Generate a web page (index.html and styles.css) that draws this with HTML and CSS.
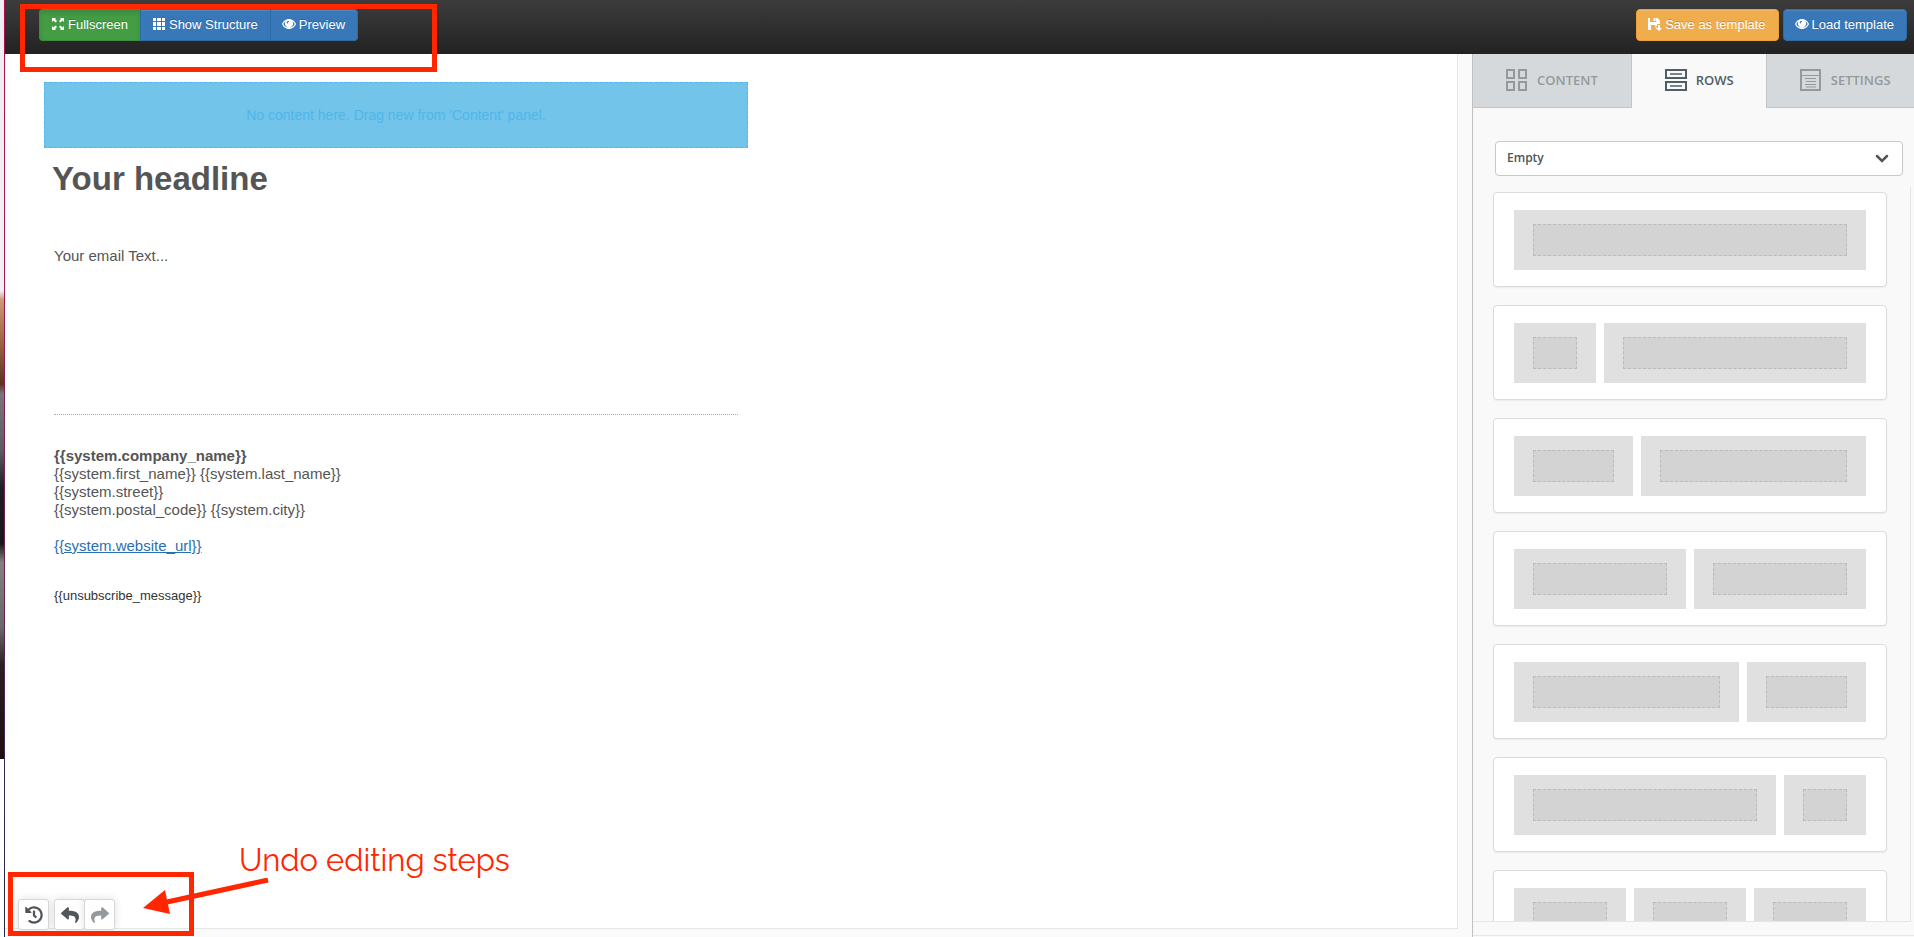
FILE: index.html
```html
<!DOCTYPE html>
<html lang="en">
<head>
    <meta charset="UTF-8">
    <title>Email template editor</title>
    <link rel="stylesheet" href="styles.css">
</head>
<body>
    <div class="app">
        <div class="photo-strip"></div>

        <div class="editor">
            <header class="topbar">
                <div class="btn-group">
                    <button type="button" class="btn btn-success">
                        <svg class="icon" viewBox="0 0 14 14"><path d="M1 1h4L4 2l2 2-1.500 1.500-2-2L1 5zM13 1v4l-1.500-1.500-2 2L8 4l2-2-1-1zM1 13V9l1.500 1.500 2-2L6 10l-2 2 1 1zM13 13H9l1-1-2-2 1.500-1.500 2 2L13 9z"/></svg>
                        Fullscreen
                    </button>
                    <button type="button" class="btn btn-primary">
                        <svg class="icon" viewBox="0 0 14 14"><path d="M1 1h3v3H1zM5 1h4v3H5zM10 1h3v3h-3zM1 5h3v4H1zM5 5h4v4H5zM10 5h3v4h-3zM1 10h3v3H1zM5 10h4v3H5zM10 10h3v3h-3z"/></svg>
                        Show Structure
                    </button>
                    <button type="button" class="btn btn-primary">
                        <svg class="icon" viewBox="0 0 14 14"><path fill-rule="evenodd" d="M7 2c3.500 0 6 2.500 7 5-1 2.500-3.500 5-7 5S1 9.500 0 7c1-2.500 3.500-5 7-5zM3.700 4.300C2.600 5 1.800 6 1.300 7c.9 2 3 3.700 5.700 3.700S11.800 9 12.700 7c-.5-1-1.300-2-2.400-2.700a4 4 0 1 1-6.600 0zM6.500 4a1.700 1.700 0 0 0-1.600 2.200c.3.600 1 .3 1-.2 0-.6.400-.8.900-.9.700-.2.500-1-.3-1.100z"/></svg>
                        Preview
                    </button>
                </div>
                <div class="template-actions">
                    <button type="button" class="btn btn-warning">
                        <svg class="icon" viewBox="0 0 14 14"><path d="M0 1h2v4h6V1h1.500L12 3.500V7H9v2H7.500L9 11v1H8L7 8H3v5H0zM5.500 1h2v3h-2zM10 8h2v3h2l-3 3-3-3h2z"/></svg>
                        Save as template
                    </button>
                    <button type="button" class="btn btn-primary">
                        <svg class="icon" viewBox="0 0 14 14"><path fill-rule="evenodd" d="M7 2c3.500 0 6 2.500 7 5-1 2.500-3.500 5-7 5S1 9.500 0 7c1-2.500 3.500-5 7-5zM3.700 4.300C2.600 5 1.800 6 1.300 7c.9 2 3 3.700 5.700 3.700S11.800 9 12.700 7c-.5-1-1.300-2-2.400-2.700a4 4 0 1 1-6.600 0zM6.500 4a1.700 1.700 0 0 0-1.600 2.200c.3.600 1 .3 1-.2 0-.6.400-.8.900-.9.700-.2.500-1-.3-1.100z"/></svg>
                        Load template
                    </button>
                </div>
            </header>

            <div class="workspace">
                <main class="canvas">
                    <div class="email">
                        <div class="drop-zone">No content here. Drag new from 'Content' panel.</div>
                        <h1>Your headline</h1>
                        <p class="email-text">Your email Text...</p>
                        <hr>
                        <address>
                            <strong>{{system.company_name}}</strong><br>
                            {{system.first_name}} {{system.last_name}}<br>
                            {{system.street}}<br>
                            {{system.postal_code}} {{system.city}}<br>
                            <br>
                            <a href="#">{{system.website_url}}</a>
                        </address>
                        <p class="unsubscribe">{{unsubscribe_message}}</p>
                    </div>
                </main>

                <aside class="sidebar">
                    <nav class="tabs">
                        <button type="button" class="tab">
                            <svg viewBox="0 0 22 22"><path d="M1 1h7v8H1zM13 1h7v8h-7zM1 13h7v8H1zM13 13h7v8h-7z" stroke-width="2"/></svg>
                            CONTENT
                        </button>
                        <button type="button" class="tab active">
                            <svg viewBox="0 0 22 22"><path d="M1 1h20v8H1zM1 13h20v8H1z" stroke-width="2"/><path d="M5 5h12M5 17h12" stroke-width="1.500"/></svg>
                            ROWS
                        </button>
                        <button type="button" class="tab">
                            <svg viewBox="0 0 22 22"><path d="M1 1h19v20H1z" stroke-width="2"/><path d="M1 6.500h19M5 9.500h11M6 12.500h10M5 15.500h11M6 18h10" stroke-width="1"/></svg>
                            SETTINGS
                        </button>
                    </nav>

                    <div class="row-type">
                        <select aria-label="Row type">
                            <option>Empty</option>
                        </select>
                        <svg class="chevron" viewBox="0 0 14 9"><path d="M2 2l5 5 5-5"/></svg>
                    </div>

                    <div class="row-list">
                        <div class="row-card"><div class="col full"><span></span></div></div>
                        <div class="row-card"><div class="col quarter"><span></span></div><div class="col three-quarters"><span></span></div></div>
                        <div class="row-card"><div class="col third"><span></span></div><div class="col two-thirds"><span></span></div></div>
                        <div class="row-card"><div class="col full"><span></span></div><div class="col full"><span></span></div></div>
                        <div class="row-card"><div class="col two-thirds"><span></span></div><div class="col third"><span></span></div></div>
                        <div class="row-card"><div class="col three-quarters"><span></span></div><div class="col quarter"><span></span></div></div>
                        <div class="row-card"><div class="col full"><span></span></div><div class="col full"><span></span></div><div class="col full"><span></span></div></div>
                    </div>
                    <div class="sidebar-footer"></div>
                </aside>
            </div>
        </div>

        <div class="history">
            <button type="button" class="history-btn" aria-label="History">
                <svg viewBox="0 0 512 512"><path d="M504 255.531c.253 136.640-111.180 248.372-247.820 248.468-59.015.042-113.223-20.530-155.822-54.911-11.077-8.940-11.905-25.541-1.839-35.607l11.267-11.267c8.609-8.609 22.353-9.551 31.891-1.984C173.062 425.135 212.781 440 256 440c101.705 0 184-82.311 184-184 0-101.705-82.311-184-184-184-48.814 0-93.149 18.969-126.068 49.932l50.754 50.754c10.080 10.080 2.941 27.314-11.313 27.314H24c-8.837 0-16-7.163-16-16V38.627c0-14.254 17.234-21.393 27.314-11.314l49.372 49.372C129.209 34.136 189.552 8 256 8c136.810 0 247.747 110.780 248 247.531zm-180.912 78.784l9.823-12.630c8.138-10.463 6.253-25.542-4.210-33.679L288 256.349V152c0-13.255-10.745-24-24-24h-16c-13.255 0-24 10.745-24 24v135.651l65.409 50.874c10.463 8.137 25.541 6.253 33.679-4.210z"/></svg>
            </button>
            <div class="history-group">
                <button type="button" class="history-btn" aria-label="Undo">
                    <svg viewBox="0 0 512 512"><path d="M8.309 189.836L184.313 37.851C199.719 24.546 224 35.347 224 56.015v80.053c160.629 1.839 288 34.032 288 186.258 0 61.441-39.581 122.309-83.333 154.132-13.653 9.931-33.111-2.533-28.077-18.631 45.344-145.012-21.507-183.510-176.590-185.742V360c0 20.700-24.300 31.453-39.687 18.164l-176.004-152c-11.071-9.562-11.086-26.753 0-36.328z"/></svg>
                </button>
                <button type="button" class="history-btn redo" aria-label="Redo">
                    <svg viewBox="0 0 512 512"><path d="M503.691 189.836L327.687 37.851C312.281 24.546 288 35.347 288 56.015v80.053C127.371 137.907 0 170.100 0 322.326c0 61.441 39.581 122.309 83.333 154.132 13.653 9.931 33.111-2.533 28.077-18.631C66.066 312.815 132.917 274.317 288 272.085V360c0 20.700 24.300 31.453 39.687 18.164l176.004-152c11.071-9.562 11.086-26.753 0-36.328z"/></svg>
                </button>
            </div>
        </div>

        <!-- Help annotations over the editor -->
        <div class="mark mark-toolbar"></div>
        <div class="mark mark-history"></div>
        <svg class="arrow" viewBox="0 0 126 40"><path d="M125 2L24 24" stroke="#ff2600" stroke-width="5"/><path d="M0 30L22 12 27 36z" fill="#ff2600"/></svg>
        <div class="mark-label">Undo editing steps</div>
    </div>
</body>
</html>
```

FILE: styles.css
```css
* {
    box-sizing: border-box;
}

body {
    margin: 0;
    font-family: "Liberation Sans", Arial, sans-serif;
    background: #fff;
}

button {
    font-family: inherit;
    cursor: pointer;
}

.app {
    position: relative;
    display: flex;
    height: 100vh;
    overflow: hidden;
}

/* Edge of the page behind the editor */
.photo-strip {
    width: 4px;
    background: linear-gradient(#eeeef4 0, #f0f0f5 31%, #c99a74 32%, #a06b45 36%, #5a3420 41%, #77777b 42%, #5d5d61 48%, #202024 52%, #17171a 58%, #85807d 60%, #69666a 67%, #2a201e 71%, #1d100c 81%, #fff 81%);
}

.editor {
    flex: 1;
    min-width: 0;
    display: flex;
    flex-direction: column;
    border-left: 1px solid;
    border-image: linear-gradient(#b0104a, #a8124f 30%, #55235a 70%, #17294a) 1;
    background: #fafafa;
}

/* Top bar */
.topbar {
    display: flex;
    justify-content: space-between;
    align-items: flex-start;
    height: 54px;
    padding: 9px 7px 0 34px;
    background: linear-gradient(#3c3c3c, #222);
}

.btn-group,
.template-actions {
    display: flex;
}

.template-actions {
    gap: 4px;
}

.btn {
    display: flex;
    align-items: center;
    gap: 3px;
    height: 32px;
    padding: 0 12px 2px 11px;
    border: 1px solid;
    border-radius: 4px;
    color: #fff;
    font-size: 13px;
    white-space: nowrap;
    text-shadow: 0 -1px 0 rgba(0, 0, 0, 0.2);
    box-shadow: inset 0 1px 0 rgba(255, 255, 255, 0.12);
}

.btn-group .btn {
    border-radius: 0;
}

.btn-group .btn:first-child {
    border-radius: 4px 0 0 4px;
    border-right-width: 0;
}

.btn-group .btn:last-child {
    border-radius: 0 4px 4px 0;
    border-left-width: 0;
}

.btn-success {
    background: #449d44;
    border-color: #3d8f3d;
    box-shadow: inset 0 3px 5px rgba(0, 0, 0, 0.125);
}

.btn-primary {
    background: #3878b8;
    border-color: #2e6da4;
}

.btn-warning {
    background: #f0ad4e;
    border-color: #eea236;
}

.icon {
    width: 14px;
    height: 14px;
    fill: #fff;
}

/* Canvas */
.workspace {
    flex: 1;
    min-height: 0;
    display: flex;
}

.canvas {
    flex: 1;
    margin: 0 14px 8px 0;
    padding: 28px 39px;
    background: #fff;
    border-right: 1px solid #e6e6e6;
    border-bottom: 1px solid #e6e6e6;
}

.email {
    max-width: 704px;
    color: #555;
    font-size: 15px;
    line-height: 18px;
}

.drop-zone {
    display: flex;
    align-items: center;
    justify-content: center;
    height: 66px;
    background: #72c4ea;
    border: 1px dashed #55b7e8;
    color: #4fb6e9;
    font-size: 14px;
}

.email h1 {
    margin: 11px 8px 0;
    font-size: 33px;
    line-height: 40px;
}

.email-text {
    margin: 48px 10px 0;
}

.email hr {
    margin: 149px 10px 0;
    border: 0;
    border-top: 1px dotted #aaa;
}

.email address {
    margin: 32px 10px 0;
    font-style: normal;
}

.email a {
    color: #2a6fb0;
}

.unsubscribe {
    margin: 32px 10px 0;
    color: #333;
    font-size: 13px;
}

/* Sidebar */
.sidebar {
    display: flex;
    flex-direction: column;
    width: 442px;
    border-left: 1px solid #bfc1c2;
    background: #f9f9f9;
    font-family: "Open Sans", "Noto Sans", sans-serif;
}

.tabs {
    display: flex;
    height: 54px;
}

.tab {
    display: flex;
    align-items: center;
    gap: 9px;
    padding: 0 32px 2px 33px;
    border: 0;
    border-bottom: 1px solid #c3c5c6;
    background: #d5d9dc;
    color: #95999c;
    font-size: 13px;
    font-weight: 600;
}

.tab svg {
    width: 22px;
    height: 22px;
    fill: none;
    stroke: currentColor;
}

.tab.active {
    border: solid #c3c5c6;
    border-width: 0 1px;
    background: #f9f9f9;
    color: #505f67;
}

.tab:first-child {
    padding-right: 33px;
}

.tab:last-child {
    flex: 1;
    padding-right: 0;
}

.row-type {
    position: relative;
    margin: 33px 11px 0 22px;
}

.row-type select {
    display: block;
    width: 100%;
    height: 35px;
    padding: 0 11px 2px;
    appearance: none;
    border: 1px solid #c8c8c8;
    border-radius: 4px;
    background: #fff;
    color: #505659;
    font-family: inherit;
    font-size: 12px;
    font-weight: 600;
}

.chevron {
    position: absolute;
    top: 13px;
    right: 14px;
    width: 14px;
    height: 9px;
    fill: none;
    stroke: #505659;
    stroke-width: 2.5;
    stroke-linecap: round;
    pointer-events: none;
}

.row-list {
    flex: 1;
    min-height: 0;
    margin: 11px 3px 0 0;
    padding: 5px 23px 0 20px;
    overflow: hidden;
    border-right: 1px solid #e6e6e6;
    border-bottom: 1px solid #e6e6e6;
}

.row-card {
    display: flex;
    gap: 8px;
    height: 95px;
    margin-bottom: 18px;
    padding: 17px 20px 16px;
    border: 1px solid #dcdcdc;
    border-radius: 4px;
    background: #fff;
    box-shadow: 0 1px 2px rgba(0, 0, 0, 0.06);
}

.col {
    display: flex;
    padding: 14px 19px;
    background: #e0e0e0;
}

.col span {
    flex: 1;
    background: #d3d3d3;
    border: 1px dashed #bbb;
}

.full {
    flex: 1;
}

.quarter {
    width: 82px;
}

.third {
    width: 119px;
}

.two-thirds,
.three-quarters {
    flex: 1;
}

.sidebar-footer {
    height: 14px;
    margin-bottom: 1px;
    border-bottom: 1px solid #e6e6e6;
}

/* Undo / redo */
.history {
    position: absolute;
    left: 18px;
    bottom: 7px;
    display: flex;
    gap: 5px;
}

.history-group {
    display: flex;
}

.history-btn {
    display: flex;
    align-items: center;
    justify-content: center;
    width: 31px;
    height: 31px;
    padding: 0;
    border: 1px solid #d5d7d9;
    border-radius: 3px;
    background: #fff;
    color: #505659;
    box-shadow: 0 0 8px rgba(0, 0, 0, 0.12);
}

.history-btn svg {
    width: 18px;
    height: 18px;
    fill: currentColor;
}

.history-btn.redo {
    margin-left: -1px;
    color: #95999c;
}

/* Annotations */
.mark {
    position: absolute;
    border: 5px solid #ff2600;
    pointer-events: none;
}

.mark-toolbar {
    top: 4px;
    left: 20px;
    width: 417px;
    height: 68px;
}

.mark-history {
    bottom: 1px;
    left: 8px;
    width: 186px;
    height: 64px;
}

.arrow {
    position: absolute;
    bottom: 19px;
    left: 143px;
    width: 126px;
    height: 40px;
}

.mark-label {
    position: absolute;
    bottom: 57px;
    left: 239px;
    color: #ff2600;
    font-family: Raleway, Lato, sans-serif;
    font-size: 31px;
    line-height: 40px;
}
```
